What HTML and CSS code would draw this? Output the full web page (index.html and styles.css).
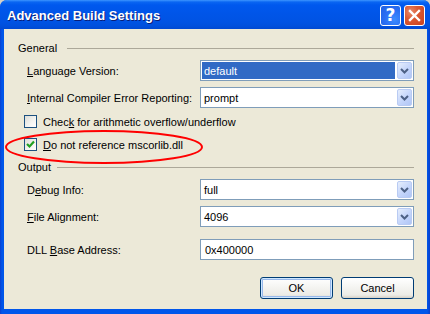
FILE: index.html
```html
<!DOCTYPE html>
<html>
<head>
<meta charset="utf-8">
<link rel="stylesheet" href="styles.css">
</head>
<body>
<div class="window">
  <div class="titlebar">
    <span class="title">Advanced Build Settings</span>
    <div class="tbtns">
      <div class="tbtn help"><span>?</span></div>
      <div class="tbtn close">
        <svg width="13" height="13" viewBox="0 0 13 13"><path d="M2 2 L11 11 M11 2 L2 11" stroke="#fff" stroke-width="2.4" stroke-linecap="square"/></svg>
      </div>
    </div>
  </div>
  <div class="frame">
    <div class="client">
      <div class="group first"><span class="gname">General</span><span class="gline"></span></div>
      <div class="row r1">
        <span class="label"><u>L</u>anguage Version:</span>
        <div class="combo"><span class="val sel">default</span><span class="drop"><svg width="9" height="6" viewBox="0 0 9 6"><path d="M1 1 L4.5 4.5 L8 1" fill="none" stroke="#4d6185" stroke-width="2"/></svg></span></div>
      </div>
      <div class="row r2">
        <span class="label"><u>I</u>nternal Compiler Error Reporting:</span>
        <div class="combo"><span class="val">prompt</span><span class="drop"><svg width="9" height="6" viewBox="0 0 9 6"><path d="M1 1 L4.5 4.5 L8 1" fill="none" stroke="#4d6185" stroke-width="2"/></svg></span></div>
      </div>
      <div class="check c1">
        <span class="box"></span>
        <span class="clabel">Chec<u>k</u> for arithmetic overflow/underflow</span>
      </div>
      <div class="check c2">
        <span class="box"><svg width="11" height="11" viewBox="0 0 11 11"><path d="M2 5 L4.5 7.5 L9 2.5" fill="none" stroke="#21a121" stroke-width="2.2"/></svg></span>
        <span class="clabel"><u>D</u>o not reference mscorlib.dll</span>
      </div>
      <div class="group second"><span class="gname">Output</span><span class="gline"></span></div>
      <div class="row r3">
        <span class="label">D<u>e</u>bug Info:</span>
        <div class="combo"><span class="val">full</span><span class="drop"><svg width="9" height="6" viewBox="0 0 9 6"><path d="M1 1 L4.5 4.5 L8 1" fill="none" stroke="#4d6185" stroke-width="2"/></svg></span></div>
      </div>
      <div class="row r4">
        <span class="label"><u>F</u>ile Alignment:</span>
        <div class="combo"><span class="val">4096</span><span class="drop"><svg width="9" height="6" viewBox="0 0 9 6"><path d="M1 1 L4.5 4.5 L8 1" fill="none" stroke="#4d6185" stroke-width="2"/></svg></span></div>
      </div>
      <div class="row r5">
        <span class="label">DLL <u>B</u>ase Address:</span>
        <div class="combo text"><span class="val">0x400000</span></div>
      </div>
      <div class="buttons">
        <div class="btn default">OK</div>
        <div class="btn">Cancel</div>
      </div>
    </div>
  </div>
  <svg class="ring" width="200" height="36" viewBox="0 0 200 36"><ellipse cx="100" cy="18" rx="98" ry="16" fill="none" stroke="#ff0000" stroke-width="2"/></svg>
</div>
</body>
</html>
```

FILE: styles.css
```css
html, body {
  margin: 0;
  padding: 0;
  background: #d4d0c8;
}
.window {
  position: relative;
  width: 430px;
  height: 314px;
  display: flex;
  flex-direction: column;
  font-family: "Liberation Sans", Arial, sans-serif;
  font-size: 11px;
  color: #000;
  border-radius: 7px 7px 0 0;
  overflow: hidden;
  background: #0054e3;
}
.titlebar {
  height: 29px;
  flex: 0 0 29px;
  display: flex;
  align-items: center;
  justify-content: space-between;
  padding: 0 5px 0 7px;
  box-sizing: border-box;
  background: linear-gradient(#3d95ff 0, #0a66f2 2px, #0058ee 5px, #0055e8 14px, #0053e3 22px, #0050dc 26px, #0049d2 29px);
}
.title {
  font-family: "Liberation Sans", Arial, sans-serif;
  font-weight: bold;
  font-size: 13px;
  color: #fff;
  text-shadow: 1px 1px 0 #0a1e78;
  padding-top: 1px;
}
.tbtns {
  display: flex;
  gap: 3px;
  padding-top: 1px;
}
.tbtn {
  width: 19px;
  height: 19px;
  border: 1px solid #fff;
  border-radius: 3px;
  display: flex;
  align-items: center;
  justify-content: center;
}
.help {
  background: radial-gradient(circle at 70% 70%, #3d8cff 0, #2a6ff4 50%, #1f5fe0 100%);
}
.help span {
  color: #fff;
  font-family: "DejaVu Sans", sans-serif;
  font-weight: bold;
  font-size: 17px;
  line-height: 19px;
}
.close {
  background: radial-gradient(circle at 30% 30%, #e88a6c 0, #db5a34 40%, #c8401c 100%);
}
.frame {
  flex: 1;
  display: flex;
  padding: 0 3px 5px 4px;
  background: linear-gradient(90deg, #0a3fd0 0, #0056ea 2px, #0056ea 427px, #0a3fcc 430px);
}
.client {
  flex: 1;
  background: #ece9d8;
  display: flex;
  flex-direction: column;
  padding: 12px 13px 0 14px;
}
.group {
  height: 14px;
  display: flex;
  align-items: center;
  color: #000;
}
.group.second { margin-top: 9px; }
.gname { margin-right: 6px; }
.gline {
  flex: 1;
  height: 0;
  border-top: 1px solid #aca899;
  margin-top: 1px;
}
.first .gline { margin-left: 4px; }
.row {
  display: flex;
  align-items: center;
  height: 21px;
  padding-left: 9px;
}
.r1 { margin-top: 5px; }
.r2 { margin-top: 6px; }
.r3 { margin-top: 5px; }
.r4 { margin-top: 6px; }
.r5 { margin-top: 12px; }
.label {
  width: 173px;
}
.combo {
  flex: 1;
  height: 21px;
  box-sizing: border-box;
  border: 1px solid #7f9db9;
  background: #fff;
  display: flex;
  align-items: stretch;
  padding: 1px;
}
.val {
  flex: 1;
  display: flex;
  align-items: center;
  padding-left: 2px;
  margin-right: 2px;
}
.val.sel {
  background: #316ac5;
  color: #fff;
}
.text .val { padding-left: 3px; }
.drop {
  width: 15px;
  box-sizing: border-box;
  border: 1px solid #b9cbf3;
  border-radius: 2px;
  background: linear-gradient(135deg, #e6eefc 0, #c4d5fb 55%, #b0c6f6 100%);
  display: flex;
  align-items: center;
  justify-content: center;
}
.check {
  display: flex;
  align-items: center;
  height: 13px;
  padding-left: 6px;
}
.c1 { margin-top: 7px; }
.c2 { margin-top: 10px; }
.box {
  width: 13px;
  height: 13px;
  box-sizing: border-box;
  border: 1px solid #1c5180;
  background: linear-gradient(135deg, #dcdcd7 0, #f5f5f2 60%, #ffffff 100%);
  display: flex;
  align-items: center;
  justify-content: center;
  margin-right: 6px;
}
.buttons {
  display: flex;
  justify-content: flex-end;
  gap: 8px;
  margin-top: 17px;
}
.btn {
  width: 73px;
  height: 22px;
  box-sizing: border-box;
  border: 1px solid #003c74;
  border-radius: 3px;
  background: linear-gradient(#ffffff 0, #f6f6f3 40%, #ecebe6 85%, #d6d0c5 100%);
  display: flex;
  align-items: center;
  justify-content: center;
}
.btn.default {
  box-shadow: inset 0 0 0 1px #cee7ff, inset 0 0 0 2px #98b8ea;
}
.ring {
  position: absolute;
  left: 4px;
  top: 129px;
}
```
